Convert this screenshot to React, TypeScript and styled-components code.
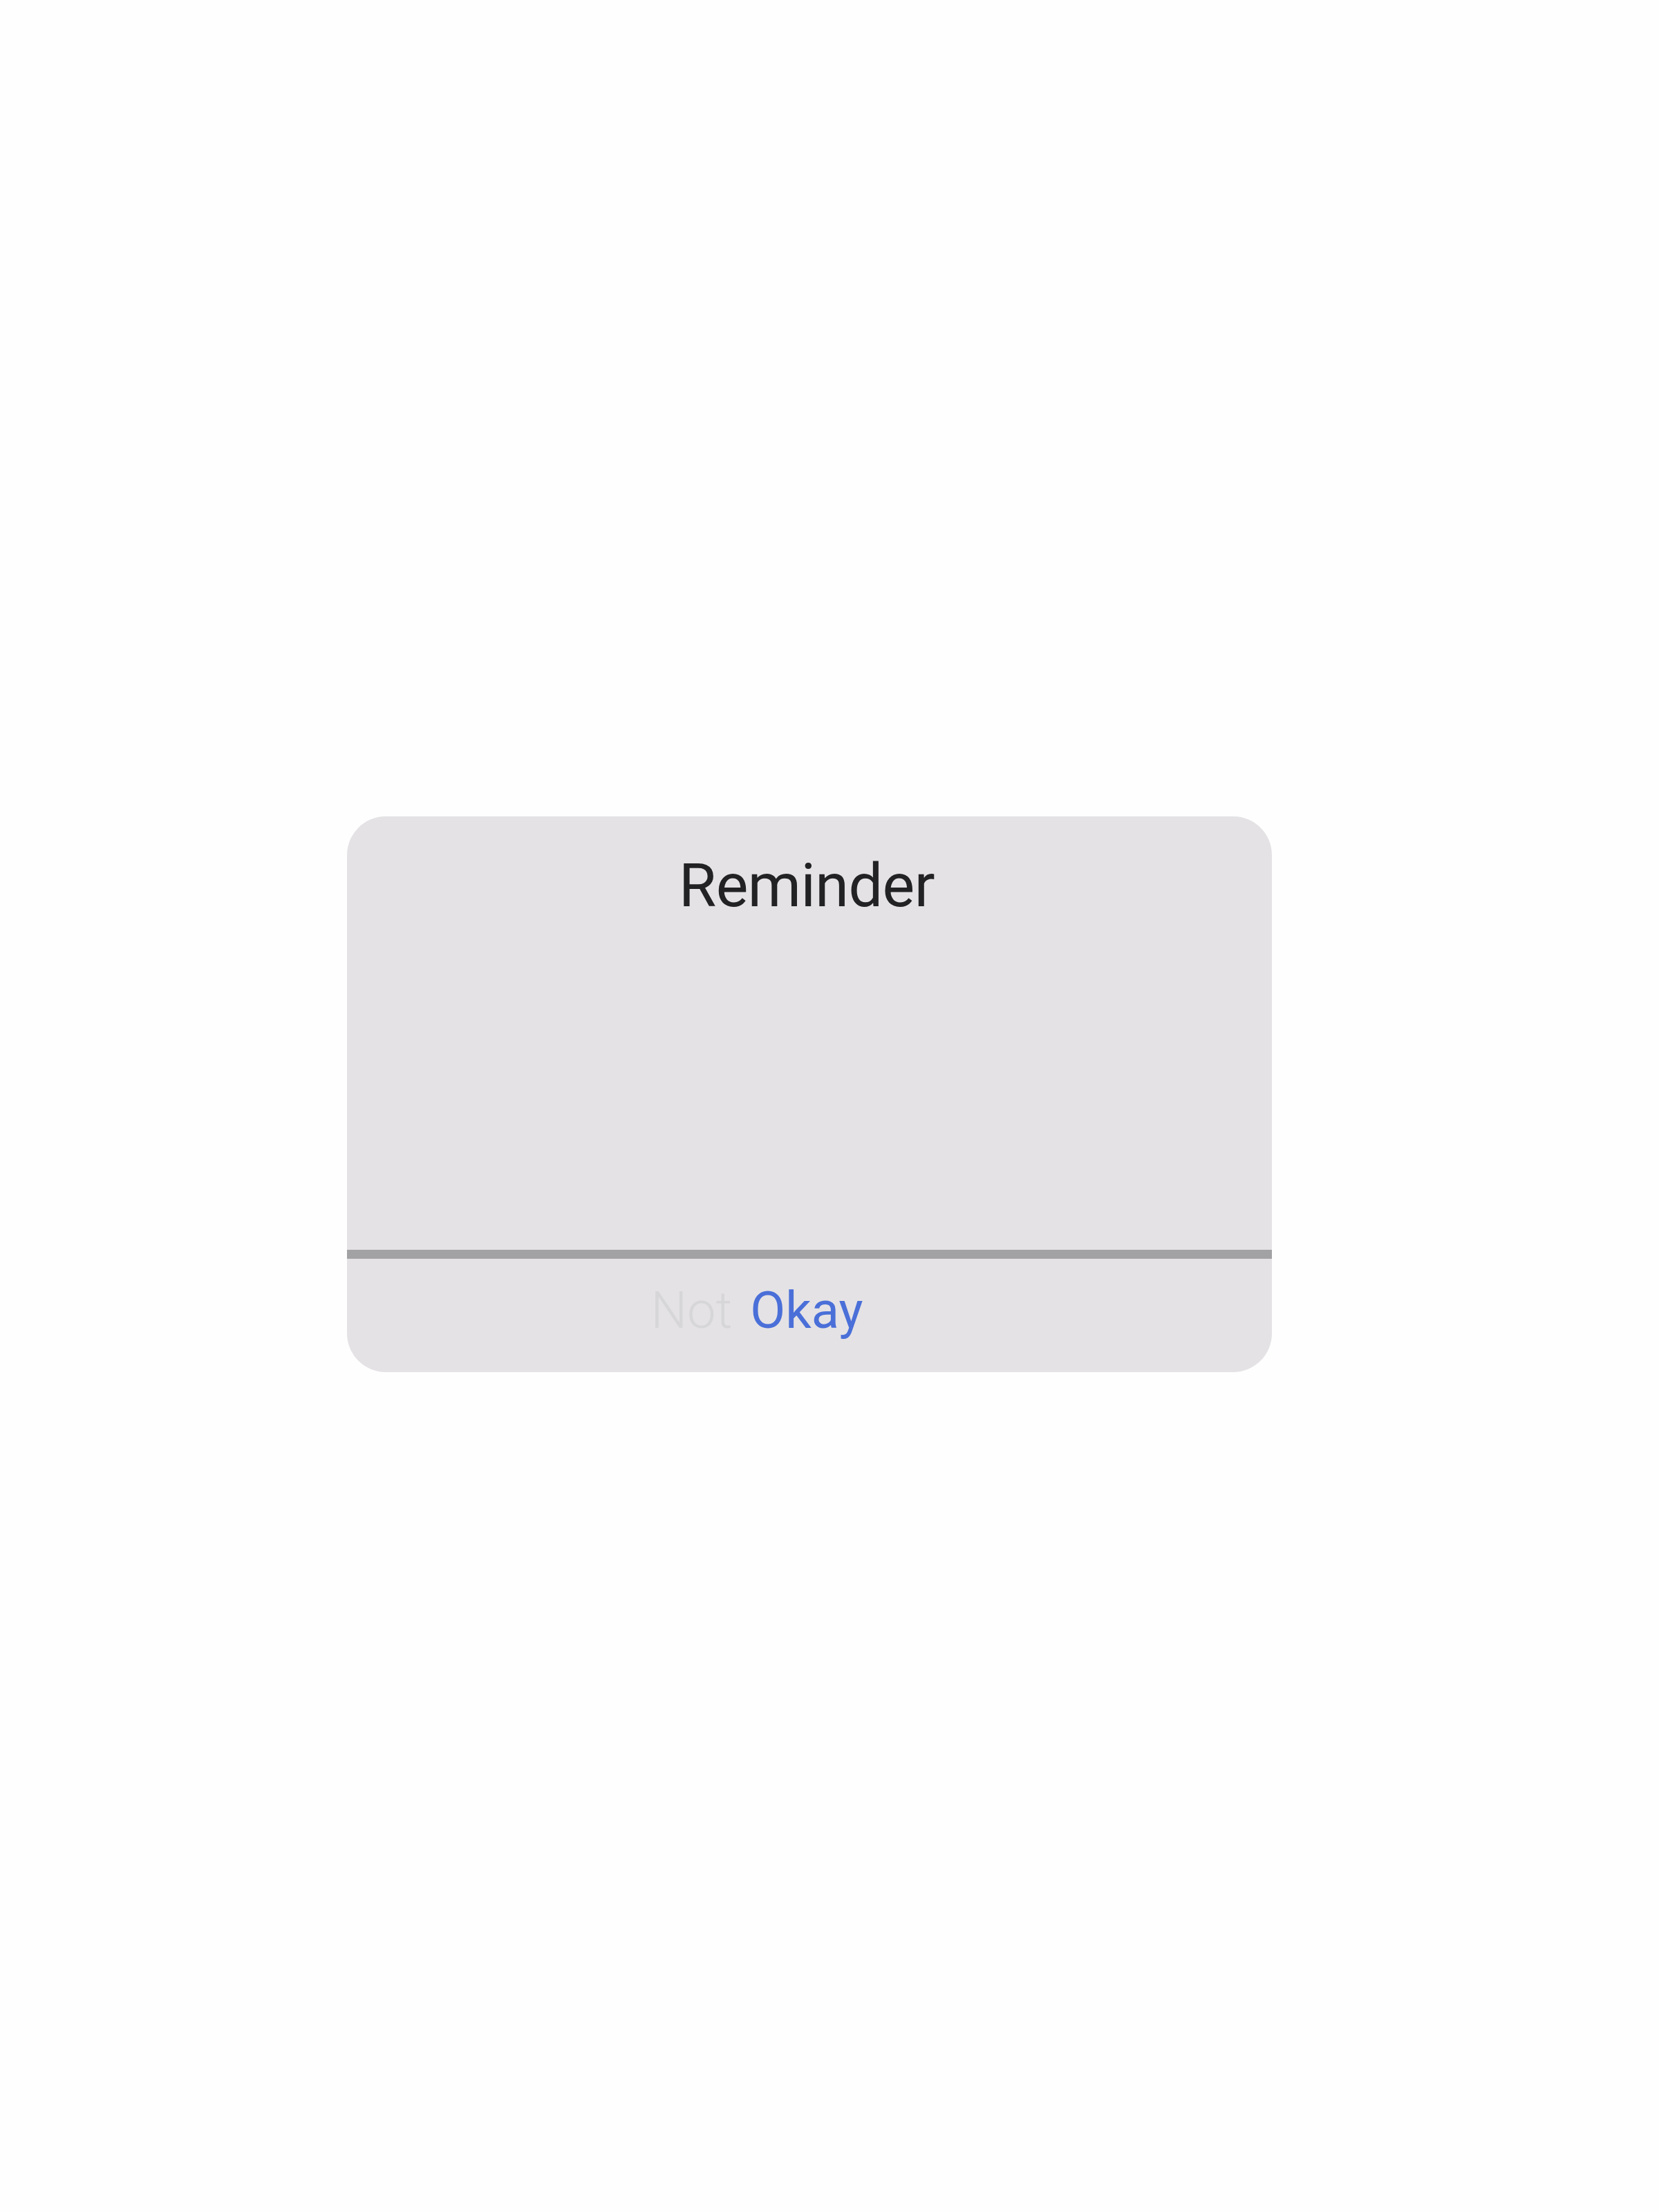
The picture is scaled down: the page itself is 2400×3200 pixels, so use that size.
import React from "react"
import styled, { createGlobalStyle } from "styled-components"

const GlobalStyle = createGlobalStyle`
  html, body {
    margin: 0;
    padding: 0;
    background: #fefefe;
  }
  body {
    font-family: Roboto, "Noto Sans", "Liberation Sans", sans-serif;
  }
`

const Page = styled.div`
  width: 2400px;
  height: 3200px;
  box-sizing: border-box;
  padding: 1181px 0 0 502px;
`

const Dialog = styled.div`
  width: 1338px;
  height: 804px;
  background: #e4e2e5;
  border-radius: 56px;
  overflow: hidden;
  display: flex;
  flex-direction: column;
`

const Body = styled.div`
  height: 627px;
  box-sizing: border-box;
  padding: 47px 8px 0 0;
  display: flex;
  justify-content: center;
`

const Title = styled.h1`
  margin: 0;
  font-size: 88px;
  font-weight: 400;
  line-height: 1.2;
  letter-spacing: -0.5px;
  color: #222123;
`

const Divider = styled.div`
  height: 13px;
  background: #a2a1a3;
`

const Footer = styled.div`
  flex: 1;
  box-sizing: border-box;
  padding: 31px 152px 0 0;
  display: flex;
  justify-content: center;
  align-items: flex-start;
  gap: 26px;
`

const ActionButton = styled.button<{ $primary?: boolean }>`
  border: none;
  background: none;
  padding: 0;
  font-family: inherit;
  font-size: 74px;
  font-weight: ${(p) => (p.$primary ? 400 : 300)};
  line-height: 1.2;
  color: ${(p) => (p.$primary ? "#4a6fd8" : "#d6d5d7")};
  cursor: pointer;
`

export default function App() {
  return (
    <>
      <GlobalStyle />
      <Page>
        <Dialog>
          <Body>
            <Title>Reminder</Title>
          </Body>
          <Divider />
          <Footer>
            <ActionButton>Not</ActionButton>
            <ActionButton $primary>Okay</ActionButton>
          </Footer>
        </Dialog>
      </Page>
    </>
  )
}
